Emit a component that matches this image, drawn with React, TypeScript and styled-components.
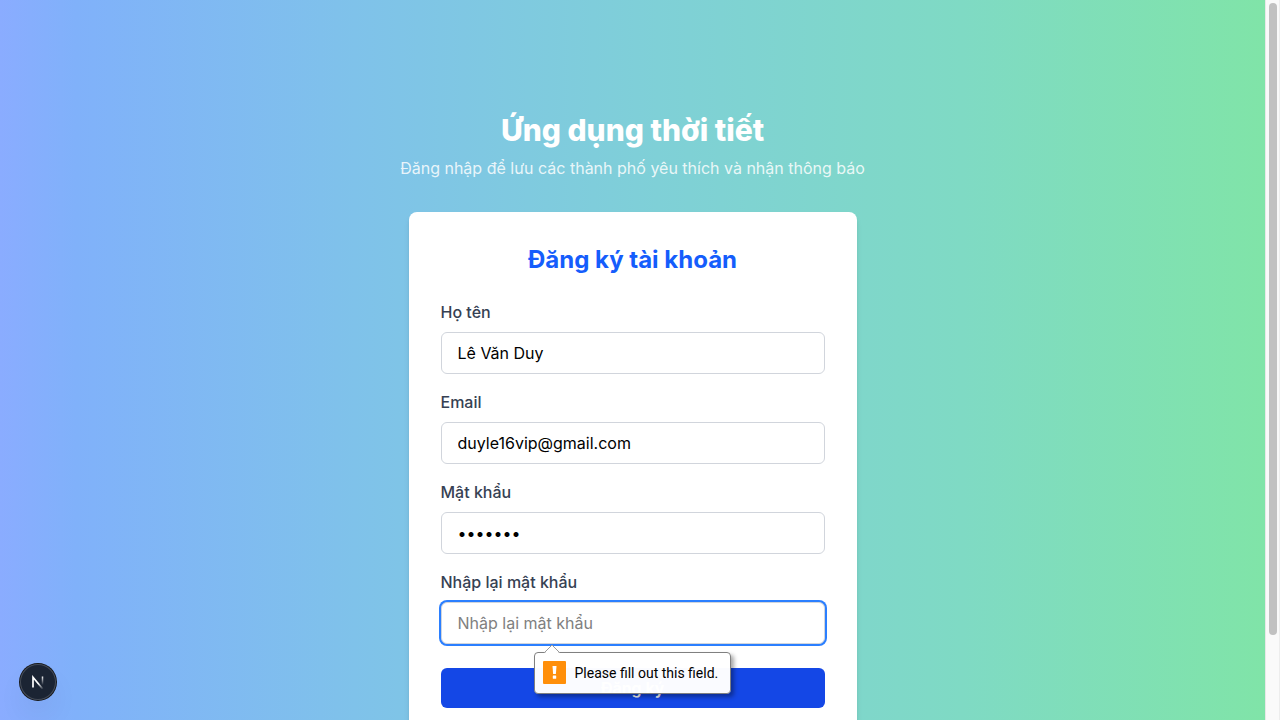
import React, { useState } from "react";
import styled, { createGlobalStyle, css } from "styled-components";

const GlobalStyle = createGlobalStyle`
  *, *::before, *::after { box-sizing: border-box; }
  html, body { margin: 0; padding: 0; }
  body {
    overflow: hidden;
    font-family: Inter, "Liberation Sans", sans-serif;
    font-size: 16px;
    line-height: 24px;
  }
  h1, h2, p { margin: 0; }
`;

const Shell = styled.div`
  display: flex;
  height: 100vh;
`;

const Page = styled.main`
  flex: 1;
  min-width: 0;
  overflow: hidden;
  display: flex;
  flex-direction: column;
  align-items: center;
  padding: 112px 16px;
  background: linear-gradient(
    to right,
    #8aacff 0%,
    #80b1fa 6%,
    #7fc2ea 28%,
    #7fd0d7 52%,
    #7fdac4 76%,
    #80e4a8 100%
  );
`;

const Header = styled.header`
  display: flex;
  flex-direction: column;
  gap: 8px;
  margin-bottom: 32px;
  text-align: center;
`;

const Title = styled.h1`
  font-size: 30px;
  line-height: 36px;
  font-weight: 800;
  color: #fff;
`;

const Subtitle = styled.p`
  color: rgba(255, 255, 255, 0.84);
`;

const Card = styled.section`
  flex-shrink: 0;
  width: 100%;
  max-width: 448px;
  padding: 32px;
  border-radius: 8px;
  background: #fff;
  box-shadow: 0 4px 6px -1px rgba(0, 0, 0, 0.1), 0 2px 4px -2px rgba(0, 0, 0, 0.1);
`;

const CardTitle = styled.h2`
  margin-bottom: 24px;
  font-size: 24px;
  line-height: 32px;
  font-weight: 700;
  text-align: center;
  color: #155dfc;
`;

const Form = styled.form`
  display: flex;
  flex-direction: column;
  gap: 16px;
`;

const Field = styled.div`
  position: relative;
  display: flex;
  flex-direction: column;
  gap: 8px;
`;

const Label = styled.label`
  font-weight: 500;
  color: #364153;
`;

const Input = styled.input<{ $active?: boolean }>`
  width: 100%;
  height: 42px;
  padding: 8px 16px;
  border: 1px solid #d1d5dc;
  border-radius: 6px;
  outline: none;
  background: #fff;
  color: #000;
  font: inherit;
  &::placeholder { color: #808080; opacity: 1; }
  ${(p) => p.$active && css`box-shadow: 0 0 0 2px #2b7fff;`}
`;

const Submit = styled.button`
  height: 40px;
  margin-top: 8px;
  border: 0;
  border-radius: 6px;
  background: #1447e6;
  color: #fff;
  font: inherit;
  font-weight: 600;
  cursor: pointer;
`;

const Bubble = styled.div`
  position: absolute;
  z-index: 2;
  top: calc(100% + 8px);
  left: 93px;
  display: flex;
  align-items: center;
  gap: 8px;
  height: 42px;
  padding: 0 12px 0 8px;
  border: 1px solid #808080;
  border-radius: 4px;
  background: rgba(255, 255, 255, 0.98);
  box-shadow: 3px 3px 4px rgba(0, 0, 0, 0.35);
  font-family: Roboto, Inter, sans-serif;
  font-size: 14px;
  line-height: 20px;
  white-space: nowrap;
  color: #000;
`;

const Arrow = styled.svg`
  position: absolute;
  top: -9px;
  left: 8px;
  display: block;
`;

const Badge = styled.button`
  position: fixed;
  left: 20px;
  bottom: 20px;
  width: 36px;
  height: 36px;
  padding: 0;
  border: 0;
  border-radius: 50%;
  display: grid;
  place-items: center;
  background: #1b2433;
  box-shadow: 0 0 0 1px #171717, inset 0 0 0 1px #454c58,
    0 16px 32px -8px rgba(0, 0, 0, 0.16);
`;

const ScrollTrack = styled.div`
  flex: 0 0 15px;
  padding: 3px 2px 0 3px;
  border-left: 1px solid #e8e8e8;
  border-right: 1px solid #ededed;
  background: #fafafa;
`;

const ScrollThumb = styled.div`
  width: 8px;
  height: calc(100% - 85px);
  border-radius: 4px;
  background: #c1c1c1;
`;

type FieldData = {
  id: string;
  label: string;
  type: string;
  initial: string;
  placeholder: string;
};

const fields: FieldData[] = [
  { id: "name", label: "Họ tên", type: "text", initial: "Lê Văn Duy", placeholder: "Họ tên" },
  { id: "email", label: "Email", type: "email", initial: "duyle16vip@gmail.com", placeholder: "Email" },
  { id: "password", label: "Mật khẩu", type: "password", initial: "1234567", placeholder: "Mật khẩu" },
  { id: "confirm", label: "Nhập lại mật khẩu", type: "password", initial: "", placeholder: "Nhập lại mật khẩu" },
];

function WarningIcon() {
  return (
    <svg width="24" height="24" viewBox="0 0 24 24" aria-hidden="true">
      <rect x="0" y="0" width="23" height="23" rx="1" fill="#ff8f0a" />
      <path d="M9.500 5h4l-.6 8h-2.800z" fill="#fff" />
      <rect x="9.800" y="14.500" width="3.400" height="3.300" rx=".6" fill="#fff" />
    </svg>
  );
}

function Validation({ message }: { message: string }) {
  return (
    <Bubble role="alert">
      <Arrow width="18" height="10" viewBox="0 0 18 10" aria-hidden="true">
        <path d="M1 10L9 1l8 9z" fill="#fff" />
        <path d="M1 9L9 1l8 8" fill="none" stroke="#9a9a9a" />
      </Arrow>
      <WarningIcon />
      <span>{message}</span>
    </Bubble>
  );
}

function NextMark() {
  return (
    <svg width="14" height="14" viewBox="0 0 14 14" fill="none" aria-hidden="true">
      <defs>
        <linearGradient id="diag" x1="8" y1="8" x2="12.500" y2="14" gradientUnits="userSpaceOnUse">
          <stop stopColor="#fff" />
          <stop offset="1" stopColor="#fff" stopOpacity="0" />
        </linearGradient>
        <linearGradient id="stem" x1="11" y1="1" x2="11" y2="10" gradientUnits="userSpaceOnUse">
          <stop stopColor="#fff" />
          <stop offset="1" stopColor="#fff" stopOpacity="0" />
        </linearGradient>
      </defs>
      <path d="M2 12.500V2.300L11.800 14" stroke="url(#diag)" strokeWidth="1.700" />
      <path d="M11.500 1.500V10" stroke="url(#stem)" strokeWidth="1.500" />
    </svg>
  );
}

export default function App() {
  const [values, setValues] = useState<Record<string, string>>(
    Object.fromEntries(fields.map((f) => [f.id, f.initial]))
  );
  return (
    <>
      <GlobalStyle />
      <Shell>
        <Page>
          <Header>
            <Title>Ứng dụng thời tiết</Title>
            <Subtitle>Đăng nhập để lưu các thành phố yêu thích và nhận thông báo</Subtitle>
          </Header>
          <Card>
            <CardTitle>Đăng ký tài khoản</CardTitle>
            <Form noValidate onSubmit={(e) => e.preventDefault()}>
              {fields.map((f) => {
                const invalid = f.id === "confirm" && !values[f.id];
                return (
                  <Field key={f.id}>
                    <Label htmlFor={f.id}>{f.label}</Label>
                    <Input
                      id={f.id}
                      type={f.type}
                      placeholder={f.placeholder}
                      value={values[f.id]}
                      $active={f.id === "confirm"}
                      onChange={(e) => setValues({ ...values, [f.id]: e.target.value })}
                    />
                    {invalid && <Validation message="Please fill out this field." />}
                  </Field>
                );
              })}
              <Submit type="submit">Đăng ký</Submit>
            </Form>
          </Card>
        </Page>
        <ScrollTrack aria-hidden="true">
          <ScrollThumb />
        </ScrollTrack>
      </Shell>
      <Badge type="button" aria-label="Next.js">
        <NextMark />
      </Badge>
    </>
  );
}
